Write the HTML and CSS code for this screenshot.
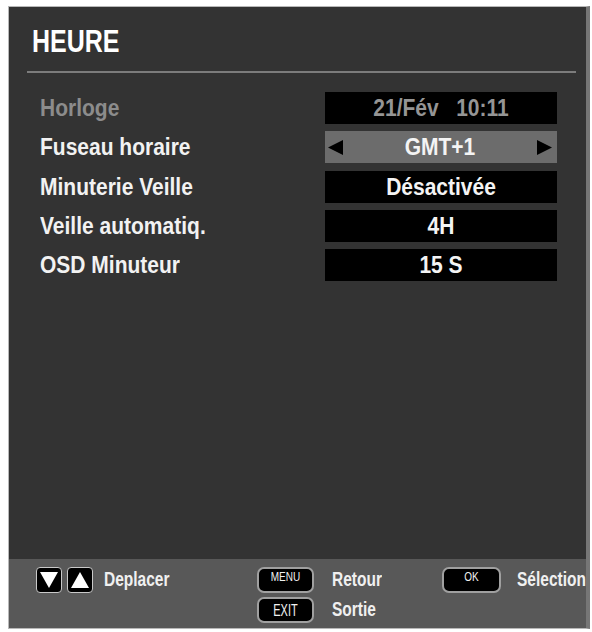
FILE: index.html
```html
<!DOCTYPE html>
<html lang="fr">
<head>
<meta charset="utf-8">
<title>HEURE</title>
<link rel="stylesheet" href="styles.css">
</head>
<body>
<div class="panel">
  <div class="header">
    <span class="title">HEURE</span>
  </div>
  <div class="sep"></div>
  <div class="main">
    <div class="rows">
      <div class="label dim">Horloge</div>
      <div class="value black dimval"><span class="vt">21/Fév   10:11</span></div>

      <div class="label">Fuseau horaire</div>
      <div class="value grey arrows">
        <svg class="arr" viewBox="0 0 15 15" width="15" height="15"><polygon points="15,0 15,15 0,7.5" fill="#000"/></svg>
        <span class="vt">GMT+1</span>
        <svg class="arr" viewBox="0 0 15 15" width="15" height="15"><polygon points="0,0 0,15 15,7.5" fill="#000"/></svg>
      </div>

      <div class="label">Minuterie Veille</div>
      <div class="value black"><span class="vt">Désactivée</span></div>

      <div class="label">Veille automatiq.</div>
      <div class="value black"><span class="vt">4H</span></div>

      <div class="label">OSD Minuteur</div>
      <div class="value black"><span class="vt">15 S</span></div>
    </div>
  </div>
  <div class="footer">
    <div class="fgroup nav">
      <span class="keybox">
        <svg viewBox="0 0 18 16" width="18" height="16"><polygon points="0,0 18,0 9,16" fill="#fff"/></svg>
      </span>
      <span class="keybox">
        <svg viewBox="0 0 18 16" width="18" height="16"><polygon points="9,0 18,16 0,16" fill="#fff"/></svg>
      </span>
      <span class="ftext first">Deplacer</span>
    </div>
    <div class="fgroup keys">
      <span class="btn"><span class="btnlabel small">MENU</span></span>
      <span class="ftext">Retour</span>
      <span class="btn"><span class="btnlabel big">EXIT</span></span>
      <span class="ftext">Sortie</span>
    </div>
    <div class="fgroup ok">
      <span class="btn okbtn"><span class="btnlabel small">OK</span></span>
      <span class="ftext">Sélection</span>
    </div>
  </div>
</div>
</body>
</html>
```

FILE: styles.css
```css
html, body {
  margin: 0;
  padding: 0;
  background: #ffffff;
}

body {
  font-family: "Liberation Sans", Arial, sans-serif;
  font-weight: bold;
}

.panel {
  margin: 6px 0 0 8px;
  width: 577px;
  height: 621px;
  border: 1px solid #b8b8b8;
  border-right: 4px solid #767676;
  background: #333333;
  display: flex;
  flex-direction: column;
}

.header {
  padding: 19px 0 0 23px;
  height: 30px;
}

.title {
  display: inline-block;
  font-size: 25px;
  line-height: 30px;
  color: #ffffff;
  transform: scaleY(1.22);
}

.sep {
  margin: 15px 0 0 18px;
  width: 549px;
  height: 2px;
  background: #7c7c7c;
}

.main {
  flex: 1;
  padding: 19px 0 0 31px;
}

.rows {
  display: grid;
  grid-template-columns: 285px 232px;
  grid-auto-rows: 32px;
  row-gap: 7.3px;
}

.label {
  font-size: 21px;
  line-height: 32px;
  color: #f2f2f2;
  white-space: nowrap;
  transform: scaleY(1.1);
}

.label.dim {
  color: #8c8c8c;
}

.value {
  font-size: 21px;
  line-height: 32px;
  color: #f4f4f4;
  text-align: center;
  white-space: pre;
}

.value.black {
  background: #000000;
}

.value.grey {
  background: #6c6c6c;
}

.value.dimval {
  color: #959595;
}

.vt {
  display: inline-block;
  transform: scaleY(1.15);
}

.arrows {
  display: grid;
  grid-template-columns: 15px 1fr 15px;
  align-items: center;
  padding: 0 5px 0 3px;
}

.arr {
  display: block;
}

.footer {
  height: 69px;
  background: #585858;
  display: grid;
  grid-template-columns: 221px 185px 1fr;
  padding: 8px 0 0 27px;
  box-sizing: border-box;
}

.fgroup {
  display: flex;
  align-items: flex-start;
}

.nav {
  gap: 5px;
}

.keybox {
  width: 26px;
  height: 26px;
  box-sizing: border-box;
  background: #000;
  border: 1.5px solid #c9c9c9;
  border-radius: 4px;
  display: flex;
  align-items: center;
  justify-content: center;
}

.ftext {
  display: inline-block;
  font-size: 15.5px;
  line-height: 26px;
  color: #f0f0f0;
  transform: scaleY(1.3);
  white-space: nowrap;
}

.ftext.first {
  margin-left: 6px;
}

.keys {
  display: grid;
  grid-template-columns: 57px auto;
  grid-auto-rows: 26px;
  column-gap: 18px;
  row-gap: 4px;
  align-content: start;
}

.btn {
  width: 57px;
  height: 26px;
  box-sizing: border-box;
  background: #000;
  border: 2px solid #a0a0a0;
  border-radius: 7px;
  display: flex;
  justify-content: center;
  color: #f0f0f0;
  font-weight: normal;
}

.okbtn {
  width: 59px;
  margin-right: 16px;
}

.btnlabel {
  display: inline-block;
}

.btnlabel.small {
  font-size: 10px;
  line-height: 18px;
  transform: scaleY(1.3);
}

.btnlabel.big {
  font-size: 11px;
  line-height: 22px;
  transform: scaleY(1.55);
}
```
